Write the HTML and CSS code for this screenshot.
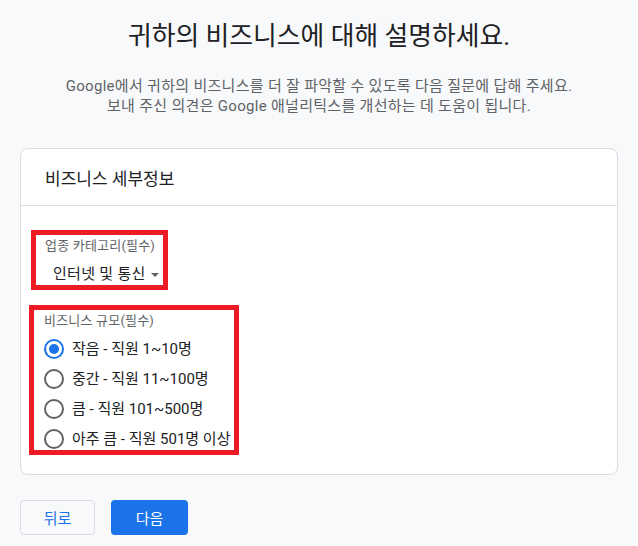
FILE: index.html
```html
<!DOCTYPE html>
<html lang="ko">
<head>
<meta charset="utf-8">
<title>비즈니스 정보</title>
<link rel="stylesheet" href="styles.css">
</head>
<body>
<div class="page">
  <h1 class="title">귀하의 비즈니스에 대해 설명하세요.</h1>
  <p class="subtitle">Google에서 귀하의 비즈니스를 더 잘 파악할 수 있도록 다음 질문에 답해 주세요.<br>보내 주신 의견은 Google 애널리틱스를 개선하는 데 도움이 됩니다.</p>

  <div class="card">
    <div class="card-header">비즈니스 세부정보</div>
    <div class="card-body">
      <div class="highlight box-category">
        <div class="field-label">업종 카테고리(필수)</div>
        <div class="select">
          <span class="select-value">인터넷 및 통신</span>
          <span class="select-arrow"></span>
        </div>
      </div>

      <div class="highlight box-size">
        <div class="field-label">비즈니스 규모(필수)</div>
        <div class="radio-list">
          <div class="radio-row"><span class="radio checked"></span><span class="radio-text">작음 - 직원 1~10명</span></div>
          <div class="radio-row"><span class="radio"></span><span class="radio-text">중간 - 직원 11~100명</span></div>
          <div class="radio-row"><span class="radio"></span><span class="radio-text">큼 - 직원 101~500명</span></div>
          <div class="radio-row"><span class="radio"></span><span class="radio-text">아주 큼 - 직원 501명 이상</span></div>
        </div>
      </div>
    </div>
  </div>

  <div class="actions">
    <button class="btn btn-back">뒤로</button>
    <button class="btn btn-next">다음</button>
  </div>
</div>
</body>
</html>
```
FILE: styles.css
```css
html, body {
  margin: 0;
  padding: 0;
  background: #f8f9fa;
}
body {
  font-family: Roboto, "Noto Sans CJK KR", sans-serif;
  color: #202124;
}
.page {
  padding: 20px 20px 0 20px;
}
.title {
  margin: 0;
  font-size: 25.8px;
  font-weight: 400;
  line-height: 32px;
  text-align: center;
  color: #202124;
}
.subtitle {
  margin: 25px 0 0 0;
  font-size: 15px;
  line-height: 19.5px;
  text-align: center;
  color: #5f6368;
  letter-spacing: 0.3px;
}
.card {
  margin-top: 32px;
  background: #fff;
  border: 1px solid #dadce0;
  border-radius: 8px;
}
.card-header {
  height: 57px;
  box-sizing: border-box;
  padding-left: 24px;
  display: flex;
  align-items: center;
  font-size: 17px;
  border-bottom: 1px solid #dadce0;
}
.card-body {
  padding: 24px 0 19px 0;
  display: flex;
  flex-direction: column;
  align-items: flex-start;
  gap: 15px;
}
.highlight {
  border: 5px solid #ed1c24;
}
.box-category {
  margin-left: 10px;
  width: 118px;
  height: 50px;
  padding-left: 9px;
}
.box-size {
  margin-left: 8px;
  width: 190px;
  padding-left: 10px;
  padding-bottom: 1px;
}
.field-label {
  font-size: 13px;
  line-height: 16px;
  color: #5f6368;
  padding-top: 3px;
  letter-spacing: 0.2px;
  white-space: nowrap;
}
.select {
  display: flex;
  align-items: center;
  gap: 5px;
  margin-top: 12px;
  padding-left: 8px;
  height: 16px;
}
.select-value {
  font-size: 15px;
  line-height: 16px;
  color: #202124;
  letter-spacing: 0.3px;
  white-space: nowrap;
}
.select-arrow {
  width: 0;
  height: 0;
  border-left: 4px solid transparent;
  border-right: 4px solid transparent;
  border-top: 4px solid #5f6368;
  margin-top: 2px;
}
.radio-list {
  margin-top: 10px;
  display: flex;
  flex-direction: column;
  gap: 10px;
}
.radio-row {
  display: flex;
  align-items: center;
  height: 20px;
  gap: 8px;
}
.radio {
  width: 20px;
  height: 20px;
  box-sizing: border-box;
  border: 2px solid #5f6368;
  border-radius: 50%;
  flex: none;
  display: flex;
  align-items: center;
  justify-content: center;
}
.radio.checked {
  border-color: #1a73e8;
}
.radio.checked::after {
  content: "";
  width: 10px;
  height: 10px;
  border-radius: 50%;
  background: #1a73e8;
}
.radio-text {
  font-size: 15px;
  line-height: 20px;
  color: #202124;
  white-space: nowrap;
}
.actions {
  margin-top: 25px;
  display: flex;
  gap: 16px;
}
.btn {
  height: 35px;
  border-radius: 4px;
  font-family: Roboto, "Noto Sans CJK KR", sans-serif;
  font-size: 15px;
  font-weight: 400;
  cursor: pointer;
  padding: 0;
}
.btn-back {
  width: 75px;
  background: #f8f9fa;
  border: 1px solid #dadce0;
  color: #1a73e8;
}
.btn-next {
  width: 77px;
  background: #1a73e8;
  border: none;
  color: #fff;
}
```
